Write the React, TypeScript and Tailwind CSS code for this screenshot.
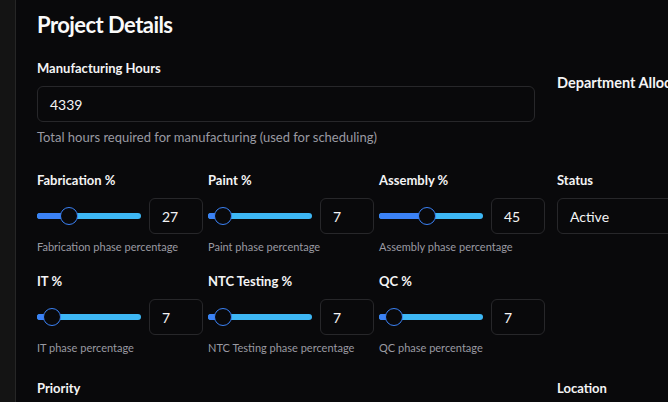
import React from "react";

const FONT = { fontFamily: 'Lato, "Noto Sans", sans-serif' };

type Phase = { label: string; value: number; help: string };

const rowOne: Phase[] = [
  { label: "Fabrication %", value: 27, help: "Fabrication phase percentage" },
  { label: "Paint %", value: 7, help: "Paint phase percentage" },
  { label: "Assembly %", value: 45, help: "Assembly phase percentage" },
];

const rowTwo: Phase[] = [
  { label: "IT %", value: 7, help: "IT phase percentage" },
  { label: "NTC Testing %", value: 7, help: "NTC Testing phase percentage" },
  { label: "QC %", value: 7, help: "QC phase percentage" },
];

function Slider({ value }: { value: number }) {
  // thumb is 18px, track is 104px
  const pos = 9 + (value / 100) * 86;
  return (
    <div className="relative h-[18px] w-[104px] shrink-0">
      <div className="absolute top-[6px] h-[6px] w-full overflow-hidden rounded-full bg-[#3db7f5]">
        <div className="h-full bg-[#3b82f6]" style={{ width: pos }} />
      </div>
      <div
        className="absolute top-0 h-[18px] w-[18px] -translate-x-1/2 rounded-full border border-[#3b82f6] bg-[#09090b]"
        style={{ left: pos }}
      />
    </div>
  );
}

function PhaseField({ phase }: { phase: Phase }) {
  return (
    <div className="w-[155px]">
      <div className="text-[13px] font-bold leading-5 text-zinc-100">{phase.label}</div>
      <div className="mt-2 flex w-[166px] items-center gap-2">
        <Slider value={phase.value} />
        <div className="flex h-[36px] w-[54px] items-center rounded-md border border-[#27272a] px-3 text-[14px] text-zinc-100">
          {phase.value}
        </div>
      </div>
      <div className="mt-[5px] whitespace-nowrap text-[11px] leading-4 text-[#9a9aa2]">{phase.help}</div>
    </div>
  );
}

export default function App() {
  return (
    <div className="flex h-[402px] w-[668px] overflow-hidden bg-[#09090b]" style={FONT}>
      <aside className="w-[16px] shrink-0 border-r border-[#262626] bg-[#141414]" />
      <main className="min-w-0 flex-1 pl-[21px] pt-[9px]">
        <h1 className="text-[22px] font-bold leading-8 tracking-tight text-zinc-50">Project Details</h1>

        <div className="mt-[17px] grid grid-cols-[498px_1fr] gap-x-[22px]">
          <div>
            <div className="text-[13px] font-bold leading-5 text-zinc-100">Manufacturing Hours</div>
            <div className="mt-2 flex h-[36px] items-center rounded-md border border-[#27272a] px-3 text-[14px] text-zinc-100">
              4339
            </div>
            <div className="mt-[5px] text-[13px] leading-5 text-[#9a9aa2]">
              Total hours required for manufacturing (used for scheduling)
            </div>
          </div>
          <div className="pt-[15px]">
            <div className="whitespace-nowrap text-[14.5px] font-bold leading-5 text-zinc-100">Department Allocation</div>
          </div>

          <div className="mt-[23px] flex gap-4">
            {rowOne.map((p) => (
              <PhaseField key={p.label} phase={p} />
            ))}
          </div>
          <div className="mt-[23px]">
            <div className="text-[13px] font-bold leading-5 text-zinc-100">Status</div>
            <div className="mt-2 flex h-[36px] w-[200px] items-center rounded-md border border-[#27272a] px-3 text-[14px] text-zinc-100">
              Active
            </div>
          </div>

          <div className="mt-4 flex gap-4">
            {rowTwo.map((p) => (
              <PhaseField key={p.label} phase={p} />
            ))}
          </div>
          <div />

          <div className="mt-[22px] text-[13px] font-bold leading-5 text-zinc-100">Priority</div>
          <div className="mt-[22px] text-[13px] font-bold leading-5 text-zinc-100">Location</div>
        </div>
      </main>
    </div>
  );
}
